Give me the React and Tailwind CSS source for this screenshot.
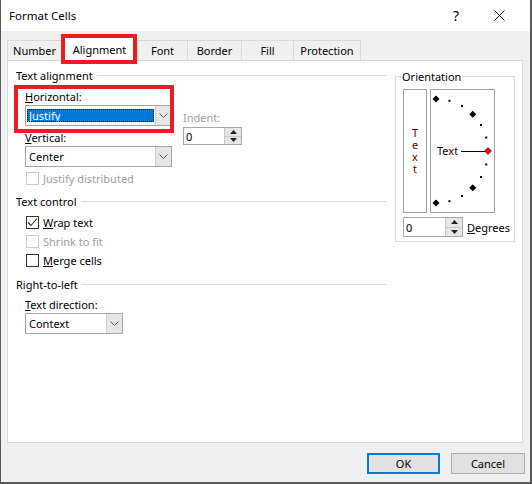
import React from "react";

const Chevron = () => (
  <svg width="9" height="5" viewBox="0 0 9 5">
    <polyline points="0.5,0.5 4.5,4.5 8.5,0.5" fill="none" stroke="#5a5a5a" strokeWidth="1" />
  </svg>
);

const Select = ({ value, width, selected }) => (
  <div className={`flex h-[21px] border border-[#a6a6a6] bg-white ${width}`}>
    {selected ? (
      <div className="flex-1 py-[3px] pl-[1px] pr-[1px]">
        <div className="h-full bg-[#0078d7] text-white pl-[2px] leading-[13px] outline-1 outline-dotted outline-[#1a1a1a] -outline-offset-1">
          {value}
        </div>
      </div>
    ) : (
      <div className="flex-1 pl-[3px] leading-[19px]">{value}</div>
    )}
    <div className="w-[16px] bg-[#e6e6e6] border-l border-[#cfcfcf] flex items-center justify-center">
      <Chevron />
    </div>
  </div>
);

const Spin = ({ width, height }) => (
  <div className={`flex border border-[#a6a6a6] bg-white ${width} ${height}`}>
    <div className="flex-1 pl-[2px] flex items-center">0</div>
    <div className="w-[17px] flex flex-col border-l border-[#c8c8c8]">
      <div className="flex-1 bg-[#e6e6e6] border-b border-[#c8c8c8] flex items-center justify-center">
        <svg width="7" height="4" viewBox="0 0 7 4">
          <polygon points="0,4 3.5,0 7,4" fill="#222" />
        </svg>
      </div>
      <div className="flex-1 bg-[#e6e6e6] flex items-center justify-center">
        <svg width="7" height="4" viewBox="0 0 7 4">
          <polygon points="0,0 3.5,4 7,0" fill="#222" />
        </svg>
      </div>
    </div>
  </div>
);

const Check = ({ checked, disabled, children, className }) => (
  <div className={`flex items-center h-[15px] pl-[10px] ${className}`}>
    <div
      className={`w-[13px] h-[13px] border bg-white flex items-center justify-center ${
        disabled ? "border-[#cccccc]" : "border-[#333333]"
      }`}
    >
      {checked && (
        <svg width="11" height="11" viewBox="0 0 11 11">
          <polyline points="1,5.5 4,8.5 10,1.5" fill="none" stroke="#333" strokeWidth="1.1" />
        </svg>
      )}
    </div>
    <span className={`ml-[4px] ${disabled ? "text-[#a0a0a0]" : "text-black"}`}>{children}</span>
  </div>
);

const SectionHead = ({ title, className }) => (
  <div className={`flex items-center h-[15px] ${className}`}>
    <span>{title}</span>
    <div className="flex-1 h-px bg-[#dcdcdc] ml-[4px]" />
  </div>
);

const Arc = () => {
  const cx = 5;
  const cy = 61;
  const r = 52;
  const pt = (deg) => [cx + r * Math.cos((deg * Math.PI) / 180), cy - r * Math.sin((deg * Math.PI) / 180)];
  const diamond = (deg) => {
    const [x, y] = pt(deg);
    return `${x},${y - 3.5} ${x + 3.5},${y} ${x},${y + 3.5} ${x - 3.5},${y}`;
  };
  const dots = [75, 60, 30, 15, -15, -30, -60, -75];
  return (
    <svg width="63" height="122" viewBox="0 0 63 122">
      {[90, 45, -45, -90].map((d) => (
        <polygon key={d} points={diamond(d)} fill="#000" />
      ))}
      {dots.map((d) => {
        const [x, y] = pt(d);
        return <rect key={d} x={x - 1} y={y - 1} width="2" height="2" fill="#000" />;
      })}
      <text x="6" y="65" fontSize="11" fontFamily="Noto Sans, sans-serif" fill="#1a0000">
        Text
      </text>
      <line x1="30" y1="61.5" x2="55" y2="61.5" stroke="#000" strokeWidth="1" />
      <polygon points={diamond(0)} fill="#ff0000" stroke="#600000" strokeWidth="0.6" />
    </svg>
  );
};

const tabs = [
  { name: "Number", w: "w-[54px]" },
  { name: "Alignment", w: "w-[76px]", active: true },
  { name: "Font", w: "w-[50px]" },
  { name: "Border", w: "w-[54px]" },
  { name: "Fill", w: "w-[52px]" },
  { name: "Protection", w: "w-[68px]" },
];

export default function App() {
  return (
    <div className="relative w-[532px] h-[484px] bg-[#5a5a5a] overflow-hidden font-['Noto_Sans','Segoe_UI',sans-serif] text-[11px] leading-[15px] text-black">
      <div className="ml-[1px] w-[529px] h-[482px] bg-[#f0f0f0] flex flex-col">
        {/* title bar */}
        <div className="h-[31px] bg-white flex items-center pl-[8px]">
          <span className="text-[11.5px]">Format Cells</span>
          <span className="ml-auto text-[14px] mr-[35px]">?</span>
          <svg width="11" height="11" viewBox="0 0 11 11" className="mr-[25px]">
            <path d="M0.5 0.5 L10.5 10.5 M10.5 0.5 L0.5 10.5" stroke="#111" strokeWidth="1" />
          </svg>
        </div>

        {/* tabs */}
        <div className="h-[29px] flex items-end pl-[6px] relative z-10">
          {tabs.map((t, i) =>
            t.active ? (
              <div
                key={t.name}
                className={`${t.w} h-[24px] -mb-px bg-white border-l border-t border-[#d9d9d9] flex items-center justify-center`}
              >
                {t.name}
              </div>
            ) : (
              <div
                key={t.name}
                className={`${t.w} h-[20px] border-t border-l border-[#d9d9d9] ${
                  i === tabs.length - 1 ? "border-r" : ""
                } flex items-center justify-center`}
              >
                {t.name}
              </div>
            )
          )}
        </div>

        {/* panel */}
        <div className="ml-[6px] w-[516px] h-[383px] bg-white border border-[#d9d9d9] flex pl-[8px]">
          <div className="w-[370px] pt-[7px]">
            <SectionHead title="Text alignment" />
            <div className="flex pl-[9px] mt-[6px]">
              <div className="w-[147px]">
                <div>
                  <span className="underline">H</span>orizontal:
                </div>
                <div className="mt-[1px]">
                  <Select value="Justify" width="w-[147px]" selected />
                </div>
                <div className="mt-[4px]">
                  <span className="underline">V</span>ertical:
                </div>
                <div className="mt-[1px]">
                  <Select value="Center" width="w-[147px]" />
                </div>
              </div>
              <div className="ml-[11px] pt-[21px]">
                <div className="text-[#a0a0a0]">Indent:</div>
                <div className="mt-[2px]">
                  <Spin width="w-[59px]" height="h-[18px]" />
                </div>
              </div>
            </div>
            <Check disabled className="mt-[4px]">
              Justify distributed
            </Check>

            <SectionHead title="Text control" className="mt-[8px]" />
            <Check checked className="mt-[6px]">
              <span className="underline">W</span>rap text
            </Check>
            <Check disabled className="mt-[4px]">
              Shrink to fit
            </Check>
            <Check className="mt-[4px]">
              <span className="underline">M</span>erge cells
            </Check>

            <SectionHead title="Right-to-left" className="mt-[9px]" />
            <div className="pl-[9px] mt-[5px]">
              <div>
                <span className="underline">T</span>ext direction:
              </div>
              <div className="mt-[1px]">
                <Select value="Context" width="w-[98px]" />
              </div>
            </div>
          </div>

          {/* orientation */}
          <div className="ml-[9px] mt-[15px] relative w-[120px] h-[166px] border border-[#dcdcdc] pt-[12px] pl-[7px]">
            <span className="absolute -top-[8px] left-[5px] bg-white px-[1px]">Orientation</span>
            <div className="flex gap-[3px]">
              <div className="w-[24px] h-[124px] border border-[#a0a0a0] flex flex-col items-center justify-center leading-[12px] text-[#5c0000]">
                <span>T</span>
                <span>e</span>
                <span>x</span>
                <span>t</span>
              </div>
              <div className="w-[65px] h-[124px] border border-[#a0a0a0]">
                <Arc />
              </div>
            </div>
            <div className="flex items-center mt-[4px]">
              <Spin width="w-[60px]" height="h-[20px]" />
              <span className="ml-[4px]">
                <span className="underline">D</span>egrees
              </span>
            </div>
          </div>
        </div>

        {/* footer */}
        <div className="flex justify-end gap-[11px] pr-[5px] mt-[10px]">
          <button className="w-[73px] h-[21px] bg-[#e1e1e1] border-2 border-[#0078d7] flex items-center justify-center">
            OK
          </button>
          <button className="w-[74px] h-[21px] bg-[#e1e1e1] border border-[#adadad] flex items-center justify-center">
            Cancel
          </button>
        </div>
      </div>

      {/* red annotation boxes */}
      <div className="absolute left-[61px] top-[34px] w-[76px] h-[30px] border-4 border-[#ed1c24] z-20 pointer-events-none" />
      <div className="absolute left-[14px] top-[85px] w-[160px] h-[48px] border-4 border-[#ed1c24] z-20 pointer-events-none" />
    </div>
  );
}
